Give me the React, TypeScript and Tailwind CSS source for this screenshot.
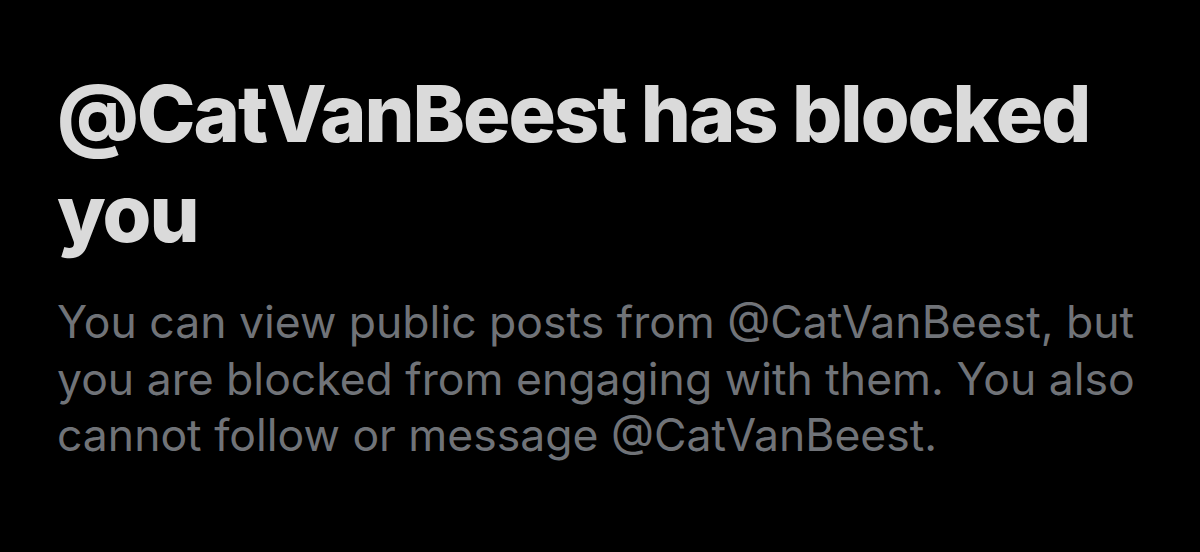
export default function App() {
  return (
    <div className="w-[1200px] h-[552px] bg-black overflow-hidden">
      <div className="flex flex-col pl-[57px] pr-[40px] pt-[63px]">
        <h1 className="font-['Inter',sans-serif] text-[79px] leading-[100px] font-extrabold tracking-[-2px] text-[#dadada]">
          @CatVanBeest has blocked
          <br />
          you
        </h1>
        <p className="mt-[31px] font-['Inter',sans-serif] text-[44.5px] leading-[56.5px] font-normal text-[#707378] whitespace-nowrap">
          You can view public posts from @CatVanBeest, but
          <br />
          you are blocked from engaging with them. You also
          <br />
          cannot follow or message @CatVanBeest.
        </p>
      </div>
    </div>
  );
}
